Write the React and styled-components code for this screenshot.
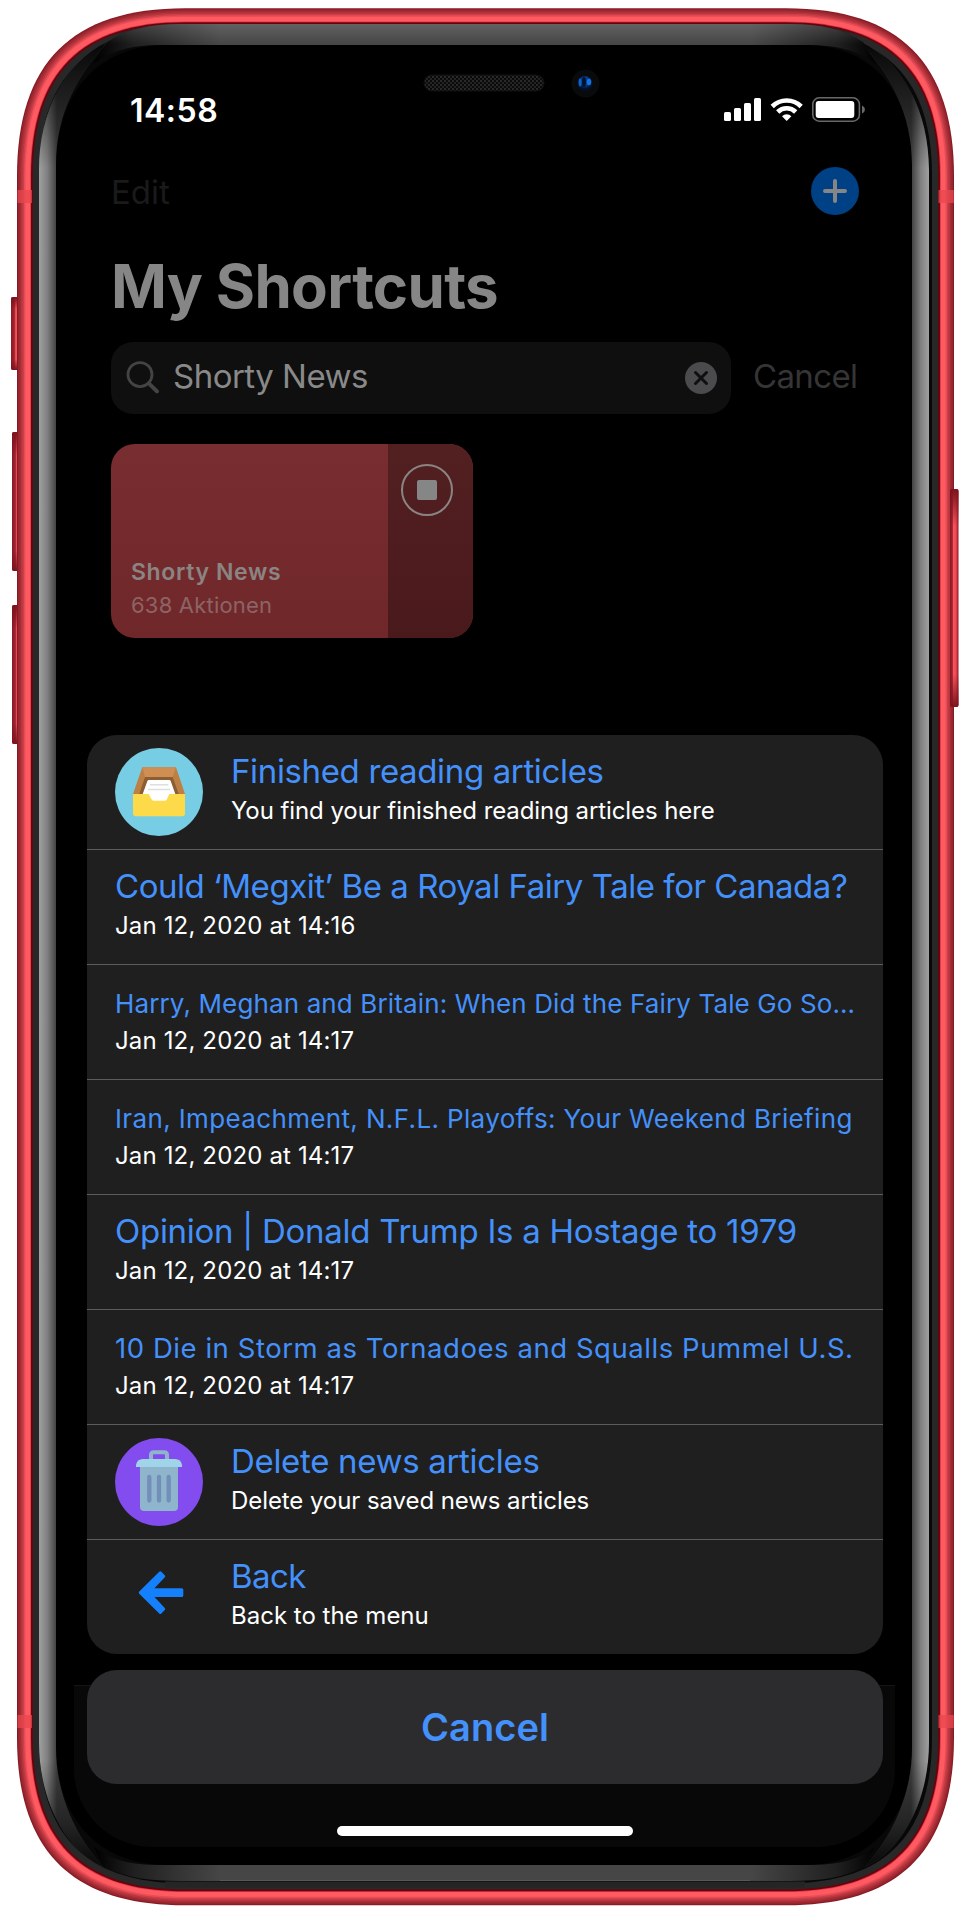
import React from "react";
import styled, { createGlobalStyle } from "styled-components";

const GlobalStyle = createGlobalStyle`
  * { box-sizing: border-box; }
  body {
    margin: 0;
    background: #fff;
    font-family: Inter, "Liberation Sans", sans-serif;
    font-weight: 400;
  }
`;

const Page = styled.div`
  position: relative;
  width: 970px;
  height: 1923px;
  overflow: hidden;
  background: #fff;
`;

const Device = styled.svg`
  position: absolute;
  inset: 0;
`;

const Dock = styled.div`
  position: absolute;
  left: 74px;
  top: 1685px;
  width: 821px;
  height: 162px;
  border-top: 1px solid #151515;
  border-radius: 0 0 78px 78px;
  background: #080808;
`;

const Screen = styled.main`
  position: relative;
  display: flex;
  flex-direction: column;
  height: 100%;
  padding: 86px 87px 0;
`;

const StatusBar = styled.div`
  display: flex;
  align-items: center;
  justify-content: space-between;
  height: 47px;
  padding: 0 17px 0 43px;
`;

const Time = styled.time`
  padding-top: 2px;
  color: #fff;
  font-size: 32px;
  font-weight: 600;
  letter-spacing: 0.5px;
`;

const NavBar = styled.nav`
  display: flex;
  align-items: center;
  justify-content: space-between;
  height: 48px;
  margin-top: 34px;
  padding: 0 24px;
`;

const NavLabel = styled.div`
  padding-top: 2px;
`;

const TextButton = styled.button`
  padding: 0;
  border: 0;
  background: none;
  color: ${(p) => p.$color};
  font: 400 33px/40px Inter, "Liberation Sans", sans-serif;
  letter-spacing: ${(p) => p.$spacing}px;
  white-space: nowrap;
`;

const Heading = styled.h1`
  margin: 35px 24px 0;
  color: #868686;
  font-size: 60px;
  font-weight: 700;
  line-height: 72px;
  letter-spacing: -0.68px;
`;

const SearchRow = styled.div`
  display: flex;
  align-items: center;
  gap: 22px;
  height: 72px;
  margin-top: 20px;
  padding-left: 24px;
`;

const SearchField = styled.div`
  display: flex;
  align-items: center;
  width: 620px;
  height: 72px;
  padding: 0 14px 0 15px;
  border-radius: 22px;
  background: #0f0f0f;
`;

const Query = styled.span`
  flex: 1;
  padding: 0 0 4px 13px;
  color: #898989;
  font-size: 33px;
  line-height: 40px;
  letter-spacing: -0.52px;
`;

const SearchCancel = styled.div`
  padding-bottom: 4px;
`;

const Card = styled.section`
  display: flex;
  width: 362px;
  height: 194px;
  margin: 30px 24px 0;
  overflow: hidden;
  border-radius: 24px;
  background: linear-gradient(#782e31, #70272a);
`;

const CardBody = styled.div`
  display: flex;
  flex: 1;
  flex-direction: column;
  justify-content: flex-end;
  padding: 0 0 16px 20px;
`;

const CardTitle = styled.strong`
  color: #8a8583;
  font-size: 23px;
  font-weight: 600;
  line-height: 32px;
  letter-spacing: 0.64px;
`;

const CardMeta = styled.span`
  color: #8c6465;
  font-size: 22px;
  line-height: 34px;
  letter-spacing: 0.2px;
`;

const CardSide = styled.div`
  display: flex;
  justify-content: center;
  width: 85px;
  padding: 20px 7px 0 0;
  background: linear-gradient(#532022, #4a191b);
`;

const StopButton = styled.div`
  display: flex;
  align-items: center;
  justify-content: center;
  width: 52px;
  height: 52px;
  border: 2px solid #8a8483;
  border-radius: 50%;
`;

const StopMark = styled.i`
  width: 20px;
  height: 20px;
  border-radius: 2px;
  background: #868686;
`;

const Sheet = styled.ul`
  width: 796px;
  margin: 97px 0 0;
  padding: 0;
  overflow: hidden;
  border-radius: 30px;
  background: #1f1f1f;
  list-style: none;
`;

const Row = styled.li`
  display: flex;
  gap: 28px;
  height: 115px;
  padding: 0 0 0 28px;
  border-bottom: 1px solid #5c5c5c;

  &:last-child {
    height: 114px;
    border-bottom: 0;
  }
`;

const RowIcon = styled.svg`
  flex: none;
  width: 88px;
  height: 88px;
  margin-top: 13px;
`;

const RowText = styled.div`
  display: flex;
  flex-direction: column;
  gap: 5px;
  padding-top: 16px;
  white-space: nowrap;
`;

const RowTitle = styled.div`
  height: 40px;
  color: #4491fb;
  font-size: 33px;
  line-height: 40px;
`;

const RowTitleText = styled.span`
  font-size: ${(p) => p.$size}px;
  line-height: 1;
  letter-spacing: ${(p) => p.$spacing}px;
`;

const RowDetail = styled.div`
  color: #fff;
  font-size: 24px;
  line-height: 30px;
  letter-spacing: ${(p) => p.$spacing}px;
`;

const SheetCancel = styled.button`
  width: 796px;
  height: 114px;
  margin-top: 16px;
  padding: 0;
  border: 0;
  border-radius: 30px;
  background: #2c2c2e;
  color: #4491fb;
  font: 600 38px/46px Inter, "Liberation Sans", sans-serif;
  letter-spacing: 0.1px;
`;

const HomeIndicator = styled.div`
  align-self: center;
  width: 296px;
  height: 10px;
  margin-top: 42px;
  border-radius: 5px;
  background: #fff;
`;

/* Outline of the phone body, shrunk by `i` pixels on every side. */
const body = (i) => {
  const l = 17 + i, r = 954 - i, t = 8.3 + i, b = 1905.3 - i;
  const e = 168 - i, k = e * 0.325;
  return `M${l} ${t + e}C${l} ${t + k} ${l + k} ${t} ${l + e} ${t}H${r - e}C${r - k} ${t} ${r} ${t + k} ${r} ${t + e}V${b - e}C${r} ${b - k} ${r - k} ${b} ${r - e} ${b}H${l + e}C${l + k} ${b} ${l} ${b - k} ${l} ${b - e}Z`;
};

const shell = [
  [0, "#861a24"], [1, "#97252e"], [2.5, "#a52d36"], [4, "#b6353e"], [5.5, "#cc3f48"],
  [7, "#e64d55"], [8.5, "#ff5a61"], [13.2, "#d93a43"], [14, "#6c000d"], [15.8, "#282828"],
];

const sideBand = "M39 170C39 112 65 62 107 42C78 76 56 112 56 165V1748C56 1795 76 1836 103 1867C65 1850 39 1800 39 1742Z";

const leftKeys = [
  { x: 11, y: 297, h: 73 },
  { x: 12, y: 432, h: 139 },
  { x: 12, y: 605, h: 139 },
];

function PhoneFrame() {
  return (
    <Device width="970" height="1923" viewBox="0 0 970 1923">
      <defs>
        <linearGradient id="side" gradientUnits="userSpaceOnUse" x1="39" x2="57">
          <stop offset="0" stopColor="#a0a0a0" />
          <stop offset=".45" stopColor="#818181" />
          <stop offset="1" stopColor="#3c3c3c" />
        </linearGradient>
        <linearGradient id="sideFade" gradientUnits="userSpaceOnUse" x1="0" x2="0" y1="40" y2="1870">
          <stop offset="0" stopOpacity=".9" />
          <stop offset=".03" stopOpacity=".5" />
          <stop offset=".07" stopOpacity="0" />
          <stop offset=".94" stopOpacity="0" />
          <stop offset=".975" stopOpacity=".4" />
          <stop offset="1" stopOpacity=".9" />
        </linearGradient>
        <linearGradient id="edge" gradientUnits="userSpaceOnUse" x1="95" x2="876">
          <stop offset="0" stopColor="#000" />
          <stop offset=".05" stopColor="#202020" />
          <stop offset=".16" stopColor="#464646" />
          <stop offset=".84" stopColor="#464646" />
          <stop offset=".95" stopColor="#202020" />
          <stop offset="1" stopColor="#000" />
        </linearGradient>
        <linearGradient id="shine" x1="0" x2="0" y1="0" y2="1">
          <stop offset="0" stopColor="#fff" stopOpacity=".15" />
          <stop offset=".5" stopColor="#fff" stopOpacity="0" />
        </linearGradient>
        <linearGradient id="key">
          <stop offset="0" stopColor="#8a1822" />
          <stop offset=".28" stopColor="#a02530" />
          <stop offset=".4" stopColor="#fb525b" />
          <stop offset=".7" stopColor="#ee4a53" />
          <stop offset="1" stopColor="#8a1822" />
        </linearGradient>
        <linearGradient id="keyEnds" x1="0" x2="0" y1="0" y2="1">
          <stop offset="0" stopColor="#7d131e" />
          <stop offset=".04" stopColor="#7d131e" stopOpacity=".8" />
          <stop offset=".17" stopColor="#7d131e" stopOpacity="0" />
          <stop offset=".85" stopColor="#7d131e" stopOpacity="0" />
          <stop offset="1" stopColor="#7d131e" />
        </linearGradient>
        <pattern id="mesh" width="4" height="4" patternUnits="userSpaceOnUse">
          <rect width="4" height="4" fill="#0a0a0a" />
          <rect width="2" height="2" fill="#292929" />
          <rect x="2" y="2" width="2" height="2" fill="#232323" />
        </pattern>
        <radialGradient id="lens" cx=".5" cy=".35">
          <stop offset="0" stopColor="#063a86" />
          <stop offset=".5" stopColor="#06409a" />
          <stop offset="1" stopColor="#02102a" />
        </radialGradient>
      </defs>

      {leftKeys.map((b) => (
        <g key={b.y}>
          <rect x={b.x} y={b.y} width="12" height={b.h} rx="2" fill="url(#key)" />
          <rect x={b.x} y={b.y} width="12" height={b.h} rx="2" fill="url(#keyEnds)" />
        </g>
      ))}
      {shell.map(([inset, color]) => (
        <path key={inset} d={body(inset)} fill={color} />
      ))}
      {[190, 1715].map((y) => (
        <g key={y} fill="#e9474f" opacity=".75">
          <rect x="17.5" y={y} width="14.5" height="13" />
          <rect x="938.5" y={y} width="15.3" height="13" />
        </g>
      ))}
      <rect x="950" y="489" width="8.5" height="218" rx="2" fill="url(#key)" />
      <rect x="950" y="489" width="8.5" height="218" rx="2" fill="url(#keyEnds)" />

      <path d={body(22)} fill="#080808" />
      <path d="M56 170C56 95 95 45 168 45H803C876 45 912 95 912 170V1745C912 1815 876 1865 803 1865H168C95 1865 56 1815 56 1745Z" />
      {[undefined, "matrix(-1 0 0 1 968 0)"].map((t, i) => (
        <g key={i} transform={t}>
          <path d={sideBand} fill="url(#side)" />
          <path d={sideBand} fill="url(#sideFade)" />
        </g>
      ))}
      {["url(#edge)", "url(#shine)"].map((f) => (
        <path key={f} fill={f} d="M107 42C128 29 150 24 180 24H790C820 24 843 29 863 42L876 64C858 51 838 45 808 45H160C130 45 112 51 93 64Z" />
      ))}
      <path d="M103 1867C128 1878 150 1881 180 1881H790C820 1881 843 1878 864 1867L875 1847C858 1860 838 1865 808 1865H160C130 1865 112 1860 94 1847Z" fill="url(#edge)" />
      <path d="M165 1884.5H805" stroke="#252525" strokeWidth="6" />
      <path d="M220 1880.5H750" stroke="#585858" />

      <rect x="424" y="75" width="120" height="16" rx="8" fill="url(#mesh)" stroke="#111" />
      <circle cx="585.5" cy="83.5" r="14" fill="#090a0c" />
      <circle cx="585" cy="83.5" r="7.5" fill="url(#lens)" />
      <ellipse cx="584" cy="82" rx="2" ry="5" fill="#03132f" />
      <ellipse cx="589" cy="82" rx="2.2" ry="3.2" fill="#1674dc" />
      <ellipse cx="580" cy="82.5" rx="1.4" ry="4" fill="#0f62c2" />
    </Device>
  );
}

const StatusIcons = () => (
  <svg width="142" height="25" viewBox="724 97 142 25">
    <g fill="#fff">
      <rect x="724" y="112" width="7" height="9" rx="1.6" />
      <rect x="734" y="108" width="7" height="13" rx="1.6" />
      <rect x="744" y="103" width="7" height="18" rx="1.6" />
      <rect x="754" y="98" width="7" height="23" rx="1.6" />
      <path d="M786.7 121L782 116.3A6.7 6.7 0 0 1 791.4 116.3Z" />
      <rect x="815.7" y="101" width="38.6" height="17" rx="3" />
    </g>
    <g fill="none" stroke="#fff" strokeWidth="4.6">
      <path d="M772.2 106.5A20.6 20.6 0 0 1 801.2 106.5" />
      <path d="M777.7 112A12.8 12.8 0 0 1 795.7 112" />
    </g>
    <rect x="812.8" y="97.8" width="46.6" height="23.4" rx="6.5" fill="none" stroke="#686868" strokeWidth="1.6" />
    <path d="M862 105.5Q865 107 865 109.5T862 113.5Z" fill="#686868" />
  </svg>
);

const AddIcon = () => (
  <svg width="48" height="48" viewBox="0 0 48 48">
    <circle cx="24" cy="24" r="24" fill="#004085" />
    <path d="M24 14V34M14 24H34" stroke="#868686" strokeWidth="4" strokeLinecap="round" />
  </svg>
);

const SearchIcon = () => (
  <svg width="34" height="34" viewBox="0 0 34 34" fill="none" stroke="#444" strokeLinecap="round">
    <circle cx="14" cy="13.6" r="12" strokeWidth="2.8" />
    <path d="M22.8 22.4L31 30.4" strokeWidth="4" />
  </svg>
);

const ClearIcon = () => (
  <svg width="32" height="32" viewBox="0 0 32 32">
    <circle cx="16" cy="16" r="16" fill="#4b4b4d" />
    <path d="M10.5 10.5L21.5 21.5M21.5 10.5L10.5 21.5" stroke="#0f0f0f" strokeWidth="3" strokeLinecap="round" />
  </svg>
);

const InboxIcon = () => (
  <RowIcon viewBox="0 0 88 88">
    <circle cx="44" cy="44" r="44" fill="#77cee4" />
    <path d="M27.3 19.3H61L70 46H18Z" fill="#bd7f43" />
    <path d="M27.3 19.3H61L57.7 29H30Z" fill="#cf8f53" />
    <path d="M30 29H57.7L63.7 46H24.3Z" fill="#8d5d33" />
    <path d="M18 46H70V65.3Q70 68.3 67 68.3H21Q18 68.3 18 65.3Z" fill="#fdda49" />
    <path d="M34 32H54.3Q55.3 32 55.7 33L60.3 46H54.3L51.8 51.4Q51 52.8 49.6 52.8H38.9Q37.4 52.8 36.7 51.4L33.7 46H27.7L32.4 33Q32.8 32 34 32Z" fill="#fff" />
    <path d="M35 36.7H53.3M33 41.5H55" stroke="#dedede" strokeWidth="1.4" />
  </RowIcon>
);

const TrashIcon = () => (
  <RowIcon viewBox="0 0 88 88">
    <circle cx="44" cy="44" r="44" fill="#824cee" />
    <path d="M36 22V17Q36 14.2 39 14.2H49Q52 14.2 52 17V22" fill="none" stroke="#8fb5cc" strokeWidth="4" />
    <path d="M25 28H63V69Q63 73 59 73H29Q25 73 25 69Z" fill="#8fb5cc" />
    <path d="M21 29V27Q22 21 28 21H60Q66 21 67 27V29Z" fill="#a0d5e9" />
    <path d="M34.3 39V62.5M44 39V62.5M53.7 39V62.5" stroke="#728eb9" strokeWidth="4.3" strokeLinecap="round" />
  </RowIcon>
);

const BackIcon = () => (
  <RowIcon viewBox="0 0 88 88">
    <path d="M25.3 39.6L45.3 19.8L48.7 23.2L36 36.8H66.8V42.4H36L48.7 56L45.3 59.4Z" fill="#1580fb" stroke="#1580fb" strokeWidth="3" strokeLinejoin="round" />
  </RowIcon>
);

const rows = [
  { icon: InboxIcon, title: "Finished reading articles", spacing: -0.36, detail: "You find your finished reading articles here", detailSpacing: -0.08 },
  { title: "Could ‘Megxit’ Be a Royal Fairy Tale for Canada?", spacing: -0.46, detail: "Jan 12, 2020 at 14:16", detailSpacing: 0.15 },
  { title: "Harry, Meghan and Britain: When Did the Fairy Tale Go So…", size: 26, spacing: 0.13, detail: "Jan 12, 2020 at 14:17", detailSpacing: 0.15 },
  { title: "Iran, Impeachment, N.F.L. Playoffs: Your Weekend Briefing", size: 26, spacing: 0.36, detail: "Jan 12, 2020 at 14:17", detailSpacing: 0.15 },
  { title: "Opinion | Donald Trump Is a Hostage to 1979", spacing: -0.27, detail: "Jan 12, 2020 at 14:17", detailSpacing: 0.15 },
  { title: "10 Die in Storm as Tornadoes and Squalls Pummel U.S.", size: 27.5, spacing: 0.55, detail: "Jan 12, 2020 at 14:17", detailSpacing: 0.15 },
  { icon: TrashIcon, title: "Delete news articles", spacing: -0.32, detail: "Delete your saved news articles", detailSpacing: -0.08 },
  { icon: BackIcon, title: "Back", spacing: -0.6, detail: "Back to the menu", detailSpacing: 0 },
];

export default function App() {
  return (
    <Page>
      <GlobalStyle />
      <PhoneFrame />
      <Dock />
      <Screen>
        <StatusBar>
          <Time>14:58</Time>
          <StatusIcons />
        </StatusBar>
        <NavBar>
          <NavLabel>
            <TextButton $color="#1a1a1a" $spacing={0}>Edit</TextButton>
          </NavLabel>
          <AddIcon />
        </NavBar>
        <Heading>My Shortcuts</Heading>
        <SearchRow>
          <SearchField>
            <SearchIcon />
            <Query>Shorty News</Query>
            <ClearIcon />
          </SearchField>
          <SearchCancel>
            <TextButton $color="#353535" $spacing={-0.65}>Cancel</TextButton>
          </SearchCancel>
        </SearchRow>
        <Card>
          <CardBody>
            <CardTitle>Shorty News</CardTitle>
            <CardMeta>638 Aktionen</CardMeta>
          </CardBody>
          <CardSide>
            <StopButton>
              <StopMark />
            </StopButton>
          </CardSide>
        </Card>
        <Sheet>
          {rows.map(({ icon: Icon, title, size = 33, spacing, detail, detailSpacing }) => (
            <Row key={title}>
              {Icon && <Icon />}
              <RowText>
                <RowTitle>
                  <RowTitleText $size={size} $spacing={spacing}>{title}</RowTitleText>
                </RowTitle>
                <RowDetail $spacing={detailSpacing}>{detail}</RowDetail>
              </RowText>
            </Row>
          ))}
        </Sheet>
        <SheetCancel>Cancel</SheetCancel>
        <HomeIndicator />
      </Screen>
    </Page>
  );
}
